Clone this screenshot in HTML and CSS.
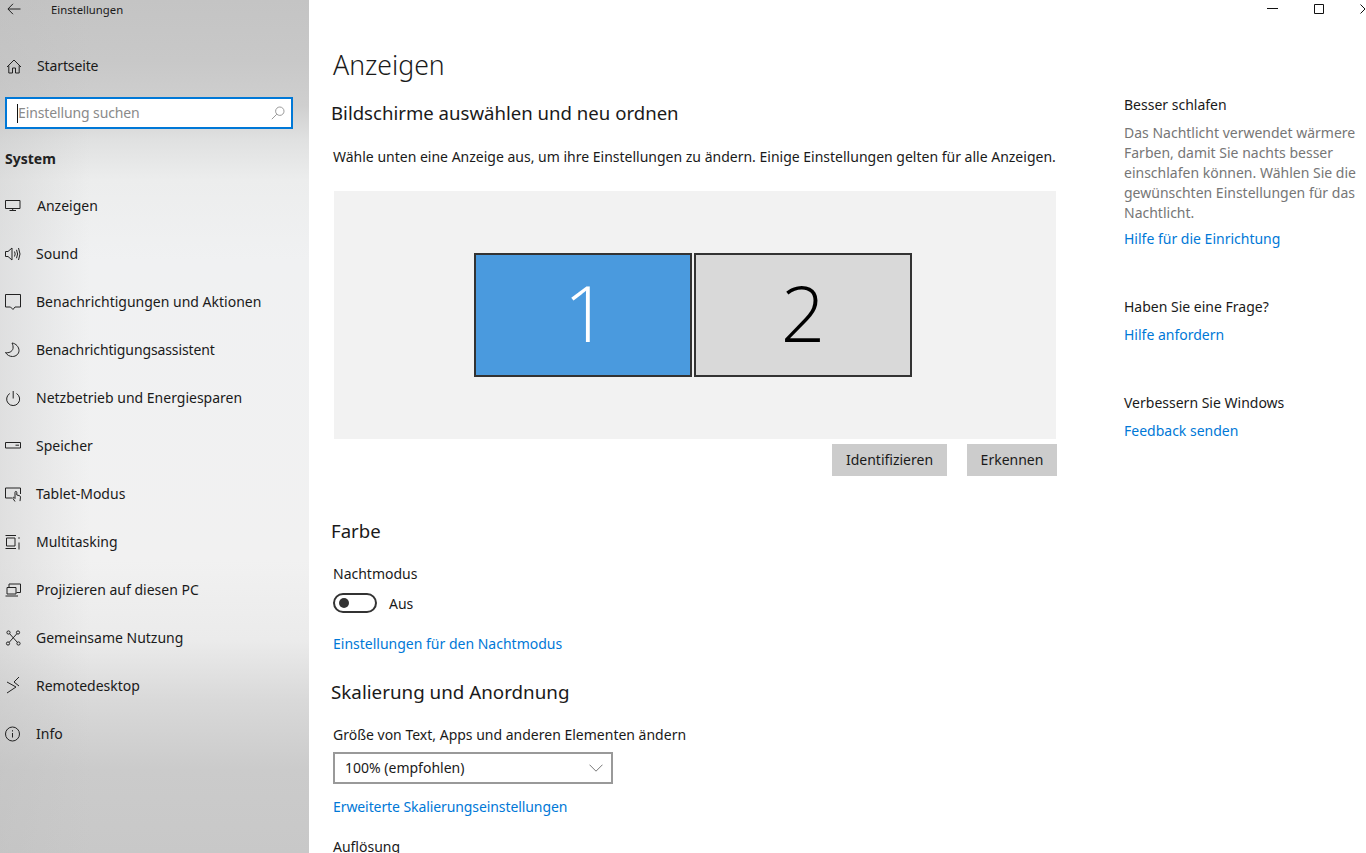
FILE: index.html
```html
<!DOCTYPE html>
<html lang="de">
<head>
<meta charset="utf-8">
<title>Einstellungen</title>
<link rel="stylesheet" href="styles.css">
</head>
<body>
<div class="window">
  <nav class="sidebar">
    <div class="titlebar">
      <svg class="back" viewBox="0 0 14 12"><path d="M13.500 6H1M6 .8 .9 6 6 11.200"/></svg>
      <span class="app-title">Einstellungen</span>
    </div>
    <div class="row home">
      <svg class="icon" viewBox="0 0 16 16"><path d="M1 9 8 2l7 7M2.800 7.500V15h3.700v-5h3v5h3.700V7.500"/></svg>
      <span class="label-wide tight">Startseite</span>
    </div>
    <div class="search">
      <span class="caret"></span>
      <span class="placeholder">Einstellung suchen</span>
      <svg class="search-icon" viewBox="0 0 14 14"><circle cx="8.800" cy="5.200" r="4.200"/><path d="M5.800 8.200.8 13.200"/></svg>
    </div>
    <div class="group">System</div>
    <div class="row">
      <svg class="icon" viewBox="0 0 16 16"><path d="M.5 2.500h14.500v8H.5zM7.700 10.500v2M4.500 12.500h6.500"/></svg>
      <span class="label-wide">Anzeigen</span>
    </div>
    <div class="row">
      <svg class="icon" viewBox="0 0 16 16"><path d="M.5 5.500h2.500L7 2v12l-4-3.500H.5zM9.500 5.500q1.400 2.500 0 5M11.500 3.800q2.200 4.200 0 8.400M13.500 2q3 6 0 12"/></svg>
      <span>Sound</span>
    </div>
    <div class="row">
      <svg class="icon" viewBox="0 0 16 16"><path d="M.5.500h15V13H10l-2 2.500L5.500 13H.5z"/></svg>
      <span>Benachrichtigungen und Aktionen</span>
    </div>
    <div class="row">
      <svg class="icon" viewBox="0 0 16 16"><path d="M7 1c4 .5 7 4 7 7.500 0 3.500-3 6-6.500 6-3 0-5.500-1.500-7-4 3 1 7-1 7.500-4 .3-2-.2-4-1-5.500z"/></svg>
      <span class="tight">Benachrichtigungsassistent</span>
    </div>
    <div class="row">
      <svg class="icon" viewBox="0 0 16 16"><path d="M4.800 3.500a6.500 6.500 0 1 0 6.700 0M8.200 1v7.500"/></svg>
      <span>Netzbetrieb und Energiesparen</span>
    </div>
    <div class="row">
      <svg class="icon" viewBox="0 0 16 16"><path d="M.5 4.500h15v5.500H.5zM10.500 7.200H14"/></svg>
      <span>Speicher</span>
    </div>
    <div class="row">
      <svg class="icon" viewBox="0 0 16 16"><path d="M7 12H.5V2h15v6M10 15.500l-2-3c-.7-1 .5-1.600 1.200-.9l.8.900V6.300c0-1.200 1.800-1.200 1.800 0V9l2.500.6c.8.200 1.200.7 1.200 1.500l-.5 4"/></svg>
      <span>Tablet-Modus</span>
    </div>
    <div class="row">
      <svg class="icon" viewBox="0 0 16 16"><path d="M.5 1.500h10.500M.5 14.500h10.500M1.500 4h8.500v8H1.500zM14 3.200v1.600M14 8.500v7"/></svg>
      <span>Multitasking</span>
    </div>
    <div class="row">
      <svg class="icon" viewBox="0 0 16 16"><path d="M4 5.500V2h11.500v8.500h-4M2 5.500h9V12H2zM.5 14h12.500"/></svg>
      <span>Projizieren auf diesen PC</span>
    </div>
    <div class="row">
      <svg class="icon" viewBox="0 0 16 16"><circle cx="3.500" cy="2.500" r="1.600"/><circle cx="13" cy="2.500" r="1.600"/><circle cx="3" cy="13.500" r="1.600"/><circle cx="13.500" cy="13.500" r="1.600"/><path d="M4.600 3.700 12.400 12.400M11.900 3.700 4.100 12.400"/></svg>
      <span>Gemeinsame Nutzung</span>
    </div>
    <div class="row">
      <svg class="icon" viewBox="0 0 16 16"><path d="M2 4 11 9 2 15M14-1 9 4l5 4"/></svg>
      <span>Remotedesktop</span>
    </div>
    <div class="row">
      <svg class="icon" viewBox="0 0 16 16"><circle cx="7.500" cy="8" r="7"/><path d="M7.500 7v4.500M7.500 4.200v1.300"/></svg>
      <span>Info</span>
    </div>
  </nav>

  <main class="content">
    <div class="window-controls">
      <svg class="min" viewBox="0 0 11 1"><path d="M0 .5h11"/></svg>
      <svg class="max" viewBox="0 0 10 10"><path d="M.5.500h9v9h-9z"/></svg>
      <svg class="close" viewBox="0 0 6 10"><path d="M.5.500 5 5 .5 9.500"/></svg>
    </div>
    <section class="primary">
      <h1>Anzeigen</h1>
      <h2 class="h-select">Bildschirme auswählen und neu ordnen</h2>
      <p class="intro">Wähle unten eine Anzeige aus, um ihre Einstellungen zu ändern. Einige Einstellungen gelten für alle Anzeigen.</p>
      <div class="preview">
        <div class="monitor active">1</div>
        <div class="monitor">2</div>
      </div>
      <div class="actions">
        <button class="btn btn-id">Identifizieren</button>
        <button class="btn btn-detect">Erkennen</button>
      </div>
      <h2 class="h-color">Farbe</h2>
      <div class="field-label night">Nachtmodus</div>
      <div class="toggle-row">
        <span class="toggle"><span class="knob"></span></span>
        <span class="toggle-text">Aus</span>
      </div>
      <a class="link night-link">Einstellungen für den Nachtmodus</a>
      <h2 class="h-scale">Skalierung und Anordnung</h2>
      <div class="field-label size">Größe von Text, Apps und anderen Elementen ändern</div>
      <div class="select">
        <span>100% (empfohlen)</span>
        <svg class="chevron" viewBox="0 0 14 8"><path d="M.5.700 7 7.200 13.500.7"/></svg>
      </div>
      <a class="link scale-link">Erweiterte Skalierungseinstellungen</a>
      <div class="field-label resolution">Auflösung</div>
    </section>
    <aside class="aside">
      <div class="aside-title">Besser schlafen</div>
      <p class="aside-text">Das Nachtlicht verwendet wärmere Farben, damit Sie nachts besser einschlafen können. Wählen Sie die gewünschten Einstellungen für das Nachtlicht.</p>
      <a class="link aside-link-first">Hilfe für die Einrichtung</a>
      <div class="aside-title spaced">Haben Sie eine Frage?</div>
      <a class="link aside-link">Hilfe anfordern</a>
      <div class="aside-title spaced">Verbessern Sie Windows</div>
      <a class="link aside-link">Feedback senden</a>
    </aside>
  </main>
</div>
</body>
</html>
```

FILE: styles.css
```css
* { box-sizing: border-box; }
html, body { margin: 0; height: 100%; overflow: hidden; background: #fff; }
body {
  font-family: "Noto Sans", "Open Sans", "Liberation Sans", sans-serif;
  font-size: 14px;
  line-height: 20px;
  color: #1a1a1a;
}
.window { display: flex; height: 853px; width: 1366px; overflow: hidden; }

/* Sidebar */
.sidebar {
  width: 309px;
  flex: none;
  background:
    linear-gradient(90deg, rgba(190,190,190,.35) 0, rgba(190,190,190,0) 90px),
    linear-gradient(180deg, #c4c4c4 0, #c8c8c8 60px, #cfcfcf 105px, #e0e1e1 140px, #eceded 180px, #f0f1f2 260px, #f1f1f1 560px, #ebebeb 640px, #d9d9d9 700px, #cbcbcb 770px, #c8c8c8 853px);
}
.titlebar { height: 20px; display: flex; align-items: center; padding-left: 7px; }
.back { width: 14px; height: 12px; margin-top: -2px; fill: none; stroke: #222; stroke-width: 1; }
.app-title { margin-left: 30px; font-size: 11.300px; line-height: 20px; }
.row { height: 48px; display: flex; align-items: center; padding-left: 5px; white-space: nowrap; }
.icon { width: 16px; height: 16px; flex: none; margin-right: 15px; fill: none; stroke: #222; stroke-width: 1; overflow: visible; }
.label-wide { margin-left: 1px; }
.tight { letter-spacing: -.12px; }
.home { margin-top: 22px; }
.home .icon { margin-left: 1px; margin-right: 14px; }
.search {
  margin: 7px 0 0 5px;
  width: 288px;
  height: 32px;
  background: #fff;
  border: 2px solid #0078d7;
  display: flex;
  align-items: center;
  padding-left: 10px;
  padding-right: 6px;
}
.caret { width: 1px; height: 19px; background: #111; flex: none; }
.placeholder { color: #8a8a8a; flex: 1; letter-spacing: -.12px; }
.search-icon { width: 14px; height: 14px; fill: none; stroke: #999; stroke-width: 1; }
.group { margin: 18px 0 0 5px; height: 28px; line-height: 24px; font-weight: 700; color: #222; }
.group + .row { margin-top: 7px; }

/* Main */
.content { position: relative; flex: 1; display: flex; min-width: 0; padding-left: 24px; }
.window-controls { position: absolute; top: 0; left: 0; right: 0; height: 20px; }
.window-controls svg { position: absolute; fill: none; stroke: #111; stroke-width: 1; }
.min { left: 958px; top: 8px; width: 11px; height: 1px; }
.max { left: 1005px; top: 4px; width: 10px; height: 10px; }
.close { left: 1051px; top: 4px; width: 6px; height: 10px; }

.primary { width: 724px; flex: none; }
h1, h2, p { margin: 0; font-weight: 400; }
h1 { margin-top: 45px; font-size: 26.600px; line-height: 40px; font-weight: 300; }
h2 { font-size: 18.600px; line-height: 28px; margin-left: -2px; }
.h-select { margin-top: 14px; }
.intro { margin-top: 20px; white-space: nowrap; }
.preview {
  margin-top: 24px;
  margin-left: 1px;
  height: 248px;
  width: 722px;
  background: #f2f2f2;
  display: flex;
  gap: 2px;
  padding: 62px 0 0 140px;
}
.monitor {
  width: 218px;
  height: 124px;
  border: 2px solid #333;
  background: #d9d9d9;
  color: #000;
  font-family: "Open Sans", sans-serif;
  font-weight: 300;
  font-size: 78px;
  line-height: 114px;
  text-align: center;
}
.monitor.active { background: #4a9ade; color: #fff; padding-left: 6px; }
.actions { display: flex; justify-content: flex-end; gap: 20px; margin-top: 5px; }
.btn {
  height: 32px;
  border: 0;
  background: #ccc;
  color: #1a1a1a;
  font: inherit;
  padding: 0;
}
.btn-id { width: 115px; }
.btn-detect { width: 90px; }
.h-color { margin-top: 41px; }
.field-label { white-space: nowrap; }
.night { margin-top: 19px; }
.toggle-row { display: flex; align-items: center; gap: 12px; height: 20px; margin-top: 9px; }
.toggle-text { padding-top: 1px; }
.toggle {
  width: 44px; height: 20px; border: 2px solid #333; border-radius: 10px;
  display: flex; align-items: center; padding-left: 4px;
}
.knob { width: 10px; height: 10px; border-radius: 50%; background: #333; }
.link { display: block; color: #0078d7; white-space: nowrap; }
.night-link { margin-top: 21px; }
.h-scale { margin-top: 24px; font-size: 18.800px; }
.size { margin-top: 19px; }
.select {
  margin-top: 7px; width: 280px; height: 32px; border: 2px solid #999;
  display: flex; align-items: center; justify-content: space-between;
  padding: 0 8px 0 10px;
}
.chevron { width: 14px; height: 8px; fill: none; stroke: #777; stroke-width: 1; }
.scale-link { margin-top: 13px; letter-spacing: -.09px; }
.resolution { margin-top: 20px; }

/* Aside */
.aside { margin-left: 67px; width: 240px; padding-top: 95px; }
.aside-text { margin-top: 8px; color: #767676; }
.aside-link-first { margin-top: 6px; }
.aside-link { margin-top: 8px; }
.spaced { margin-top: 48px; }
```
